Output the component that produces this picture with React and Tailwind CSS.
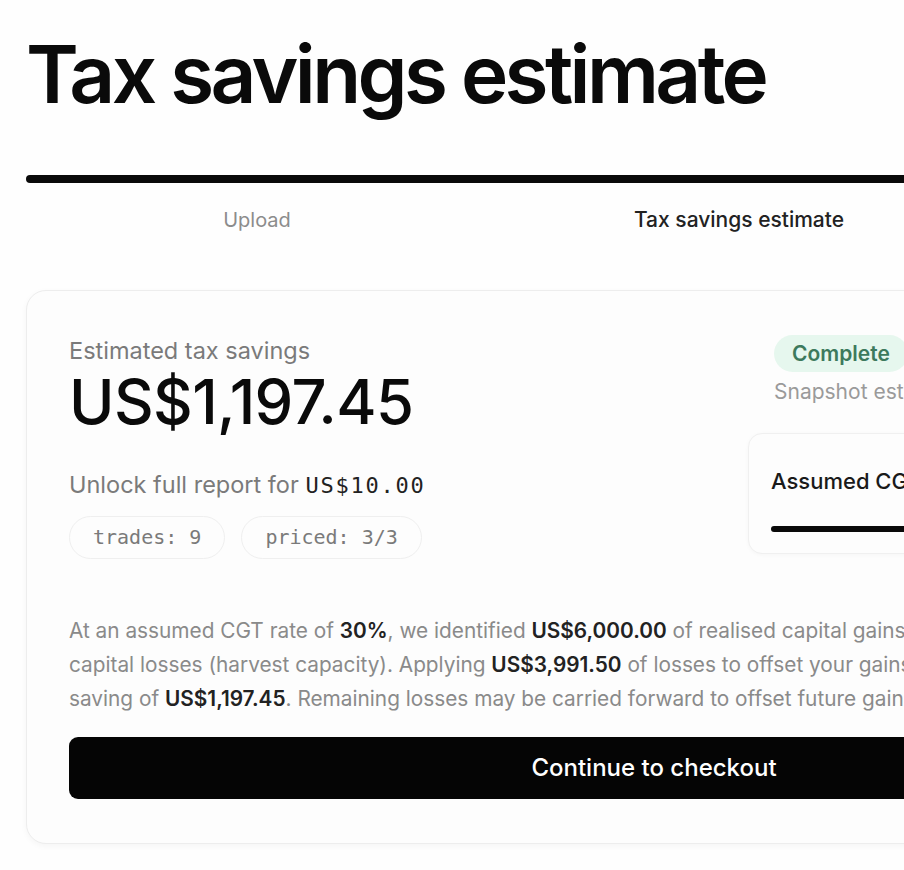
import React from 'react';

const steps = [
  { label: 'Upload', active: false },
  { label: 'Tax savings estimate', active: true },
  { label: 'Checkout', active: false },
];

export default function App() {
  return (
    <div className="min-h-screen w-full overflow-hidden bg-[#fefefe] font-['Inter','Liberation_Sans',sans-serif] text-[#0a0a0a]">
      <div className="ml-[26px] w-[1256px]">
        {/* Heading */}
        <h1 className="mt-[34px] text-[80px] font-semibold leading-none tracking-[-0.045em]">
          Tax savings estimate
        </h1>

        {/* Stepper */}
        <div className="mt-[61px] h-[8px] w-full rounded-full bg-[#0a0a0a]" />
        <div className="mt-[23px] grid grid-cols-[462px_462px_462px] gap-[20px]">
          {steps.map((s) => (
            <div
              key={s.label}
              className={
                s.active
                  ? 'text-center text-[21px] leading-[28px] font-medium text-[#222]'
                  : 'text-center text-[20px] leading-[28px] text-[#8c8c8c]'
              }
            >
              {s.label}
            </div>
          ))}
        </div>

        {/* Card */}
        <div className="mt-[56px] rounded-[20px] border border-[#ededed] bg-[#fdfdfd] px-[42px] pt-[44px] pb-[44px] shadow-[0_2px_6px_rgba(0,0,0,0.04)]">
          <div className="flex justify-between">
            <div className="flex flex-col">
              <div className="text-[23.5px] leading-[32px] text-[#7a7a7a]">Estimated tax savings</div>
              <div className="mt-[4px] text-[61.5px] font-medium leading-none tracking-[-0.01em]">US$1,197.45</div>
              <div className="mt-[36px] text-[23.5px] leading-[32px] text-[#7a7a7a]">
                Unlock full report for{' '}
                <span className="font-['DejaVu_Sans_Mono',monospace] text-[22px] tracking-[0.08em] text-[#222]">US$10.00</span>
              </div>
              <div className="mt-[14px] flex gap-[16px]">
                <span className="flex h-[43px] items-center rounded-full border border-[#efefef] px-[23px] font-['DejaVu_Sans_Mono',monospace] text-[20px] text-[#7a7a7a]">
                  trades: 9
                </span>
                <span className="flex h-[43px] items-center rounded-full border border-[#efefef] px-[23px] font-['DejaVu_Sans_Mono',monospace] text-[20px] text-[#7a7a7a]">
                  priced: 3/3
                </span>
              </div>
            </div>

            <div className="flex w-[491px] flex-col">
              <div className="pl-[26px]">
                <span className="inline-flex h-[37px] items-center rounded-full bg-[#e6f7ee] px-[18px] text-[21px] font-semibold text-[#3d7a5d]">
                  Complete
                </span>
                <div className="mt-[6px] whitespace-nowrap text-[21px] leading-[28px] text-[#9a9a9a]">
                  Snapshot estimate based on your uploaded trades
                </div>
              </div>
              <div className="mt-[27px] rounded-[14px] border border-[#f0f0f0] bg-[#fdfdfd] px-[22px] pt-[32px] pb-[21px] shadow-[0_1px_4px_rgba(0,0,0,0.03)]">
                <div className="flex justify-between text-[22px] leading-[30px] font-medium text-[#1a1a1a]">
                  <span>Assumed CGT rate</span>
                  <span>30%</span>
                </div>
                <div className="mt-[30px] h-[6px] w-full rounded-full bg-[#0a0a0a]" />
              </div>
            </div>
          </div>

          <p className="mt-[55px] text-[20.8px] leading-[34px] text-[#8a8a8a]">
            At an assumed CGT rate of <b className="font-semibold text-[#222]">30%</b>, we identified{' '}
            <b className="font-semibold text-[#222]">US$6,000.00</b> of realised capital gains and US$3,991.50 of
            <br />
            capital losses (harvest capacity). Applying <b className="font-semibold text-[#222]">US$3,991.50</b> of
            losses to offset your gains gives an estimated tax
            <br />
            saving of <b className="font-semibold text-[#222]">US$1,197.45</b>. Remaining losses may be carried forward
            to offset future gains.
          </p>

          <button className="mt-[21px] flex h-[62px] w-full items-center justify-center rounded-[9px] bg-[#050505] text-[24px] font-medium text-white">
            Continue to checkout
          </button>
        </div>
      </div>
    </div>
  );
}
